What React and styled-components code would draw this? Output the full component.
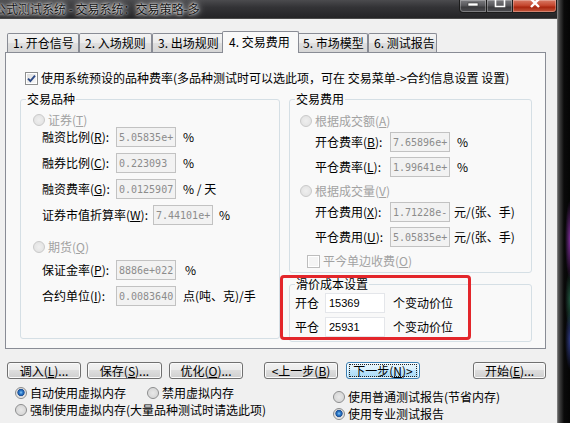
import React from "react";
import styled, { createGlobalStyle } from "styled-components";

const Global = createGlobalStyle`
  html, body { margin: 0; padding: 0; background: #060608; }
  body {
    width: 570px; height: 423px; overflow: hidden;
    font-family: "Noto Sans CJK SC", "Noto Sans", sans-serif;
    font-size: 12px; color: #000;
  }
  #root { width: 570px; height: 423px; }
`;

const Screen = styled.div`
  display: flex;
  width: 570px;
  height: 423px;
  overflow: hidden;
`;

const Window = styled.div`
  flex: none;
  width: 557px;
  display: flex;
  flex-direction: column;
`;

const SideFrame = styled.div`
  flex: none;
  width: 13px;
  height: 423px;
  background:
    radial-gradient(ellipse 5px 40px at 100% 240px, rgba(170, 60, 210, 0.7), transparent),
    radial-gradient(ellipse 5px 30px at 100% 300px, rgba(60, 160, 120, 0.5), transparent),
    radial-gradient(ellipse 5px 30px at 100% 340px, rgba(70, 90, 210, 0.6), transparent),
    linear-gradient(90deg, #9c9c9c 0, #5d5d5d 1px, #3a3a3a 3px, #232323 5px, #0a0a0a 7px, #050505 100%);
`;

const TitleBar = styled.div`
  flex: none;
  height: 18px;
  display: flex;
  align-items: flex-start;
  overflow: hidden;
  background: linear-gradient(180deg, #4b4b4e 0%, #333336 40%, #242426 100%);
`;

const TitleText = styled.div`
  margin-left: -6px;
  margin-top: 1px;
  line-height: 15px;
  font-size: 12px;
  white-space: nowrap;
  color: #141414;
  text-shadow: 0 0 2px #fff, 0 0 5px rgba(255, 255, 255, 0.9), 0 0 9px rgba(255, 255, 255, 0.7);
`;

const CaptionButtons = styled.div`
  margin-left: auto;
  display: flex;
`;

const CapButton = styled.div`
  box-sizing: border-box;
  width: ${(p) => p.$w}px;
  height: 13px;
  border: 1px solid #1c1c1c;
  border-top: none;
  margin-left: -1px;
  display: flex;
  justify-content: center;
  align-items: flex-start;
  background: ${(p) =>
    p.$close
      ? "linear-gradient(180deg, #d97a66 0%, #c5472f 45%, #a9260f 60%, #c65a40 100%)"
      : "linear-gradient(180deg, #7c7c80 0%, #58585c 45%, #3b3b3e 60%, #4e4e52 100%)"};
  box-shadow: inset 0 0 0 1px rgba(255, 255, 255, 0.28);
  &:first-child { border-bottom-left-radius: 4px; }
  &:last-child { border-bottom-right-radius: 4px; }
`;

const Client = styled.div`
  flex: 1;
  display: flex;
  flex-direction: column;
  background: #f0f0f0;
  border-top: 1px solid #4a4a4a;
`;

const TabStrip = styled.div`
  display: flex;
  align-items: flex-end;
  height: 21px;
  margin-top: 12px;
  padding-left: 7px;
`;

const Tab = styled.div`
  box-sizing: border-box;
  flex: none;
  width: ${(p) => p.$w + (p.$active ? 4 : 0)}px;
  height: ${(p) => (p.$active ? 22 : 19)}px;
  margin: 0 ${(p) => (p.$active ? -2 : 0)}px ${(p) => (p.$active ? -1 : 0)}px;
  padding: ${(p) => (p.$active ? "0 0 2px 6px" : "0 0 0 5px")};
  border: 1px solid #898c95;
  border-bottom: none;
  border-radius: 2px 2px 0 0;
  background: ${(p) =>
    p.$active
      ? "#f9f9f9"
      : "linear-gradient(180deg, #f3f3f3 0%, #ebebeb 50%, #dfdfdf 51%, #d6d6d6 100%)"};
  display: flex;
  align-items: center;
  white-space: nowrap;
  line-height: 14px;
  position: relative;
  z-index: ${(p) => (p.$active ? 2 : 1)};
`;

const Panel = styled.div`
  box-sizing: border-box;
  width: 541px;
  height: 297px;
  margin-left: 5px;
  padding: 18px 0 0 14px;
  border: 1px solid #898c95;
  background: #f9f9f9;
  display: flex;
  flex-direction: column;
`;

const CheckRow = styled.label`
  display: flex;
  align-items: center;
  gap: 3px;
  height: 14px;
  margin-left: ${(p) => p.$ml || 0}px;
  margin-top: ${(p) => p.$mt || 0}px;
  padding-left: ${(p) => p.$pl || 0}px;
  white-space: nowrap;
  line-height: 14px;
  color: ${(p) => (p.$disabled ? "#a2a2a2" : "#000")};
`;

const CheckBox = styled.span`
  flex: none;
  box-sizing: border-box;
  width: 13px;
  height: 13px;
  border: 1px solid ${(p) => (p.$disabled ? "#bdbdbd" : "#8e8f8f")};
  background: ${(p) => (p.$disabled ? "#f4f4f4" : "linear-gradient(135deg, #dcdcdc, #fbfbfb)")};
  box-shadow: inset 0 0 0 1px #fff;
  display: flex;
  align-items: center;
  justify-content: center;
`;

const Columns = styled.div`
  display: flex;
  gap: 9px;
  margin-top: 7px;
`;

const RightCol = styled.div`
  display: flex;
  flex-direction: column;
  gap: 4px;
`;

const Group = styled.fieldset`
  box-sizing: border-box;
  margin: 0;
  padding: 0;
  min-width: 0;
  width: ${(p) => p.$w}px;
  height: ${(p) => p.$h}px;
  border: 1px solid #d5dfe5;
  border-radius: 3px;
`;

const Legend = styled.legend`
  margin-left: 5px;
  padding: 0 1px;
  height: 14px;
  line-height: 14px;
  color: #000;
`;

const GroupBody = styled.div`
  display: flex;
  flex-direction: column;
`;

const SlipWrap = styled.div`
  position: relative;
`;

const Highlight = styled.div`
  position: absolute;
  left: -9px;
  top: -2px;
  width: 191px;
  height: 65px;
  box-sizing: border-box;
  border: 3px solid #e3262b;
  border-radius: 4px;
  pointer-events: none;
`;

const Option = styled.label`
  display: flex;
  align-items: center;
  gap: 3px;
  height: 14px;
  margin-top: ${(p) => p.$mt || 0}px;
  padding-left: ${(p) => p.$pl || 0}px;
  width: ${(p) => (p.$w ? `${p.$w}px` : "auto")};
  flex: none;
  white-space: nowrap;
  line-height: 14px;
  color: ${(p) => (p.$disabled ? "#a2a2a2" : "#000")};
`;

const RadioDot = styled.span`
  flex: none;
  box-sizing: border-box;
  width: 12px;
  height: 12px;
  border-radius: 50%;
  border: 1px solid ${(p) => (p.$disabled ? "#c9c9c9" : "#8a8b8c")};
  background: ${(p) =>
    p.$checked
      ? "radial-gradient(circle at 50% 45%, #8ec8f4 0, #2f7fce 1.6px, #1c4f97 3.3px, #d4d4d4 3.9px, #ececec 5px, #fafafa 100%)"
      : p.$disabled
      ? "radial-gradient(circle, #efefef 0, #e4e4e4 70%, #f2f2f2 100%)"
      : "radial-gradient(circle, #e8e8e8 0, #d9d9d9 60%, #f4f4f4 100%)"};
`;

const FieldRow = styled.div`
  display: flex;
  align-items: center;
  height: 20px;
  margin-top: ${(p) => p.$mt || 0}px;
  padding-left: ${(p) => p.$pl || 0}px;
  white-space: nowrap;
`;

const FieldLabel = styled.span`
  flex: none;
  width: ${(p) => p.$w}px;
  line-height: 14px;
`;

const ValueBox = styled.input`
  flex: none;
  box-sizing: border-box;
  width: 60px;
  height: 20px;
  margin: 0;
  padding: 0 0 0 ${(p) => (p.$white ? 3 : 2)}px;
  border: 1px solid ${(p) => (p.$white ? "#e4e6ea" : "#c2c2c2")};
  background: ${(p) => (p.$white ? "#fff" : "#f2f2f2")};
  color: ${(p) => (p.$white ? "#000" : "#8c8c8c")};
  -webkit-text-fill-color: ${(p) => (p.$white ? "#000" : "#8c8c8c")};
  font-family: ${(p) => (p.$white ? '"Liberation Sans", Arial, sans-serif' : '"DejaVu Sans Mono", monospace')};
  font-size: ${(p) => (p.$white ? 11 : 10)}px;
  outline: none;
  opacity: 1;
`;

const Unit = styled.span`
  margin-left: ${(p) => p.$ml || 7}px;
  line-height: 14px;
`;

const Acc = styled.u`
  text-decoration: underline;
  text-underline-offset: 1px;
`;

const ButtonRow = styled.div`
  display: flex;
  margin-top: 13px;
  padding-left: 7px;
`;

const Button = styled.button`
  flex: none;
  box-sizing: border-box;
  width: ${(p) => p.$w || 74}px;
  height: 17px;
  margin: 0 0 0 ${(p) => p.$ml || 0}px;
  padding: 0;
  border: 1px solid ${(p) => (p.$focus ? "#3c7fb1" : "#707070")};
  border-radius: 3px;
  background: ${(p) =>
    p.$focus
      ? "linear-gradient(180deg, #eaf6fd 0%, #d9f0fc 45%, #bee6fd 50%, #a7d9f5 100%)"
      : "linear-gradient(180deg, #f2f2f2 0%, #ebebeb 45%, #dddddd 50%, #cfcfcf 100%)"};
  box-shadow: inset 0 0 0 1px ${(p) => (p.$focus ? "rgba(255,255,255,0.7)" : "#fafafa")};
  font-family: "Noto Sans CJK SC", "Noto Sans", sans-serif;
  font-size: 12px;
  line-height: 13px;
  color: #000;
  white-space: nowrap;
  display: flex;
  align-items: center;
  justify-content: center;
`;

const FocusRing = styled.span`
  border: 1px dotted #222;
  padding: 0 3px;
  line-height: 11px;
`;

const Options = styled.div`
  display: flex;
  align-items: flex-start;
  margin-top: 7px;
`;

const OptCol = styled.div`
  display: flex;
  flex-direction: column;
  gap: 3px;
  flex: none;
  width: ${(p) => (p.$w ? `${p.$w}px` : "auto")};
  margin-top: ${(p) => p.$mt || 0}px;
  padding-left: ${(p) => p.$pl || 0}px;
  box-sizing: border-box;
`;

const OptLine = styled.div`
  display: flex;
`;

function Radio({ checked, disabled, children, ...rest }) {
  return (
    <Option $disabled={disabled} {...rest}>
      <RadioDot $checked={checked} $disabled={disabled} />
      <span>{children}</span>
    </Option>
  );
}

function Check({ checked, disabled, children, ...rest }) {
  return (
    <CheckRow $disabled={disabled} {...rest}>
      <CheckBox $disabled={disabled}>
        {checked && (
          <svg width="9" height="9" viewBox="0 0 9 9">
            <path d="M1 4.6 L3.4 7 L8 1.6" fill="none" stroke="#2d4a86" strokeWidth="1.9" strokeLinejoin="miter" />
          </svg>
        )}
      </CheckBox>
      <span>{children}</span>
    </CheckRow>
  );
}

function Field({ label, lw, value, unit, unitMl, white, mt, pl }) {
  return (
    <FieldRow $mt={mt} $pl={pl}>
      <FieldLabel $w={lw}>{label}</FieldLabel>
      <ValueBox readOnly value={value} $white={white} />
      {unit && <Unit $ml={unitMl}>{unit}</Unit>}
    </FieldRow>
  );
}

const tabs = [
  { t: "1. 开仓信号", w: 72 },
  { t: "2. 入场规则", w: 73 },
  { t: "3. 出场规则", w: 72 },
  { t: "4. 交易费用", w: 73, active: true },
  { t: "5. 市场模型", w: 71 },
  { t: "6. 测试报告", w: 69 },
];

export default function App() {
  return (
    <>
      <Global />
      <Screen>
        <Window>
          <TitleBar>
            <TitleText>公式测试系统 - 交易系统：交易策略-多</TitleText>
            <CaptionButtons>
              <CapButton $w={28}>
                <svg width="12" height="8" viewBox="0 0 12 8">
                  <rect x="1" y="3" width="10" height="3" fill="#fff" stroke="#333" strokeWidth="0.6" />
                </svg>
              </CapButton>
              <CapButton $w={27}>
                <svg width="12" height="8" viewBox="0 0 12 8">
                  <path d="M1.5 -1 V6.5 H10.5 V-1" fill="none" stroke="#fff" strokeWidth="1.6" />
                </svg>
              </CapButton>
              <CapButton $w={45} $close>
                <svg width="14" height="9" viewBox="0 0 14 9">
                  <path d="M1 -3 L11 7 M13 -3 L3 7" stroke="#fff" strokeWidth="2.4" />
                </svg>
              </CapButton>
            </CaptionButtons>
          </TitleBar>
          <Client>
            <TabStrip>
              {tabs.map((tb) => (
                <Tab key={tb.t} $w={tb.w} $active={tb.active}>
                  {tb.t}
                </Tab>
              ))}
            </TabStrip>
            <Panel>
              <Check checked $ml={5}>
                使用系统预设的品种费率(多品种测试时可以选此项，可在 交易菜单-&gt;合约信息设置 设置)
              </Check>
              <Columns>
                <Group $w={260} $h={247}>
                  <Legend>交易品种</Legend>
                  <GroupBody>
                    <Radio disabled $mt={7} $pl={12}>
                      证券(<Acc>T</Acc>)
                    </Radio>
                    <Field pl={21} lw={74} label={<>融资比例(<Acc>R</Acc>):</>} value="5.05835e+" unit="%" />
                    <Field pl={21} lw={74} mt={6} label={<>融券比例(<Acc>C</Acc>):</>} value="0.223093" unit="%" />
                    <Field pl={21} lw={74} mt={6} label={<>融资费率(<Acc>G</Acc>):</>} value="0.0125907" unit="% / 天" />
                    <Field pl={21} lw={111} mt={6} label={<>证券市值折算率(<Acc>W</Acc>):</>} value="7.44101e+" unit="%" unitMl={6} />
                    <Radio disabled $mt={15} $pl={12}>
                      期货(<Acc>Q</Acc>)
                    </Radio>
                    <Field pl={21} lw={74} mt={6} label={<>保证金率(<Acc>P</Acc>):</>} value="8886e+022" unit="%" unitMl={9} />
                    <Field pl={21} lw={74} mt={6} label={<>合约单位(<Acc>I</Acc>):</>} value="0.0083640" unit="点(吨、克)/手" />
                  </GroupBody>
                </Group>
                <RightCol>
                  <Group $w={243} $h={181}>
                    <Legend>交易费用</Legend>
                    <GroupBody>
                      <Radio disabled $mt={8} $pl={10}>
                        根据成交额(<Acc>A</Acc>)
                      </Radio>
                      <Field pl={25} lw={75} mt={4} label={<>开仓费率(<Acc>B</Acc>):</>} value="7.65896e+" unit="%" />
                      <Field pl={25} lw={75} mt={5} label={<>平仓费率(<Acc>L</Acc>):</>} value="1.99641e+" unit="%" />
                      <Radio disabled $mt={7} $pl={10}>
                        根据成交量(<Acc>V</Acc>)
                      </Radio>
                      <Field pl={25} lw={75} mt={4} label={<>开仓费用(<Acc>X</Acc>):</>} value="1.71228e-" unit="元/(张、手)" unitMl={4} />
                      <Field pl={25} lw={75} mt={5} label={<>平仓费用(<Acc>U</Acc>):</>} value="5.05835e+" unit="元/(张、手)" unitMl={4} />
                      <Check disabled $mt={7} $pl={17}>
                        平今单边收费(<Acc>O</Acc>)
                      </Check>
                    </GroupBody>
                  </Group>
                  <SlipWrap>
                    <Group $w={243} $h={65}>
                      <Legend>滑价成本设置</Legend>
                      <GroupBody>
                        <Field pl={5} lw={30} mt={2} label="开仓" value="15369" white unit="个变动价位" unitMl={8} />
                        <Field pl={5} lw={30} mt={4} label="平仓" value="25931" white unit="个变动价位" unitMl={8} />
                      </GroupBody>
                    </Group>
                    <Highlight />
                  </SlipWrap>
                </RightCol>
              </Columns>
            </Panel>
            <ButtonRow>
              <Button>调入(<Acc>L</Acc>)...</Button>
              <Button $ml={6} $w={75}>保存(<Acc>S</Acc>)...</Button>
              <Button $ml={7}>优化(<Acc>O</Acc>)...</Button>
              <Button $ml={21}>&lt;上一步(<Acc>B</Acc>)</Button>
              <Button $ml={8} $focus>
                <FocusRing>下一步(<Acc>N</Acc>)&gt;</FocusRing>
              </Button>
              <Button $ml={53} $w={73}>开始(<Acc>E</Acc>)...</Button>
            </ButtonRow>
            <Options>
              <OptCol $w={333} $pl={15}>
                <OptLine>
                  <Radio checked $w={132}>自动使用虚拟内存</Radio>
                  <Radio>禁用虚拟内存</Radio>
                </OptLine>
                <Radio>强制使用虚拟内存(大量品种测试时请选此项)</Radio>
              </OptCol>
              <OptCol $mt={4}>
                <Radio>使用普通测试报告(节省内存)</Radio>
                <Radio checked>使用专业测试报告</Radio>
              </OptCol>
            </Options>
          </Client>
        </Window>
        <SideFrame />
      </Screen>
    </>
  );
}
